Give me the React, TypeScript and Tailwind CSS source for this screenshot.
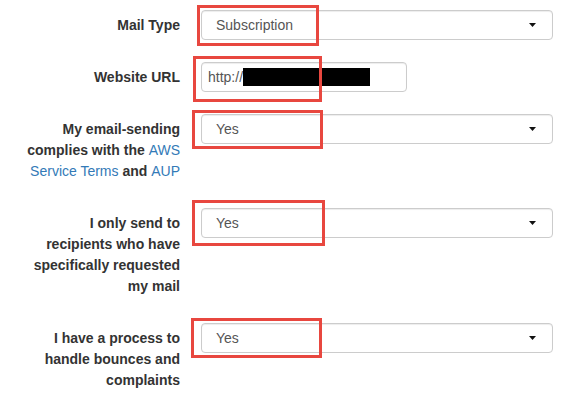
import type { ReactNode } from "react";

const Caret = () => (
  <svg width="7" height="4" viewBox="0 0 7 4" className="shrink-0">
    <path d="M0 0 L7 0 L3.5 4 Z" fill="#111" />
  </svg>
);

const Highlight = ({ pos }: { pos: string }) => (
  <div className={`absolute border-[3px] border-[#e8473f] pointer-events-none ${pos}`} />
);

const Select = ({ value, pos }: { value: string; pos: string }) => (
  <div className="relative flex-1">
    <div className="h-[30px] flex items-center justify-between pl-[14px] pr-[16px] bg-white border border-[#ccc] rounded-[4px] shadow-[inset_0_1px_1px_rgba(0,0,0,0.075)] text-[#555]">
      <span>{value}</span>
      <Caret />
    </div>
    <Highlight pos={pos} />
  </div>
);

const Row = ({
  label,
  height,
  children,
}: {
  label: ReactNode;
  height: string;
  children: ReactNode;
}) => (
  <div className={`flex items-start ${height}`}>
    <label className="w-[157px] ml-[23px] pt-[5px] text-right font-bold text-[#333] leading-[21px]">
      {label}
    </label>
    <div className="flex-1 flex ml-[21px] mr-[20px]">{children}</div>
  </div>
);

export default function App() {
  return (
    <div className="w-[573px] h-[393px] overflow-hidden bg-white pt-[10px] text-[14px] font-['Liberation_Sans',Arial,sans-serif]">
      <Row label="Mail Type" height="h-[52px]">
        <Select value="Subscription" pos="left-[-4px] top-[-5px] w-[122px] h-[41px]" />
      </Row>
      <Row label="Website URL" height="h-[52px]">
        <div className="relative">
          <div className="w-[206px] h-[30px] flex items-center pl-[6px] bg-white border border-[#ccc] rounded-[4px] shadow-[inset_0_1px_1px_rgba(0,0,0,0.075)] text-[#555]">
            <span>http://</span>
            <span className="w-[127px] h-[18px] bg-black" />
          </div>
          <Highlight pos="left-[-8px] top-[-6px] w-[129px] h-[46px]" />
        </div>
      </Row>
      <Row
        height="h-[94px]"
        label={
          <>
            My email-sending complies with the{" "}
            <a className="font-normal text-[#337ab7]">AWS Service Terms</a> and{" "}
            <a className="font-normal text-[#337ab7]">AUP</a>
          </>
        }
      >
        <Select value="Yes" pos="left-[-9px] top-[-4px] w-[131px] h-[39px]" />
      </Row>
      <Row height="h-[115px]" label="I only send to recipients who have specifically requested my mail">
        <Select value="Yes" pos="left-[-9px] top-[-8px] w-[133px] h-[46px]" />
      </Row>
      <Row height="h-[70px]" label="I have a process to handle bounces and complaints">
        <Select value="Yes" pos="left-[-10px] top-[-5px] w-[131px] h-[40px]" />
      </Row>
    </div>
  );
}
